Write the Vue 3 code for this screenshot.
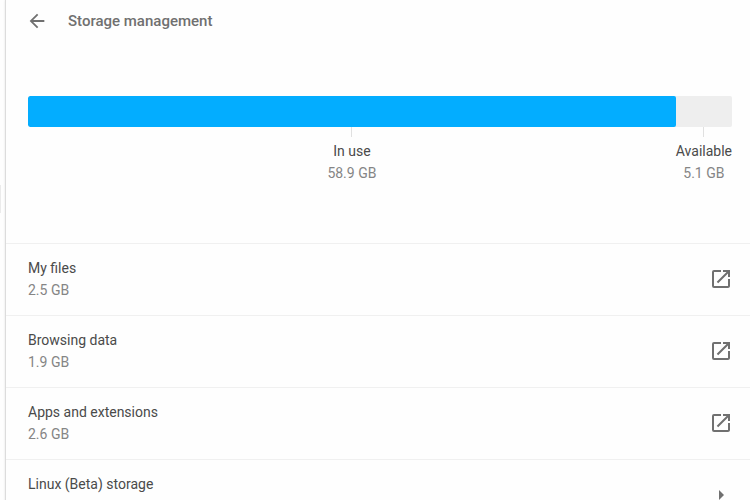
<script setup>
const used = 58.9
const available = 5.1
const usedShare = (used / (used + available)) * 100

const items = [
  { name: 'My files', size: '2.5 GB', external: true },
  { name: 'Browsing data', size: '1.9 GB', external: true },
  { name: 'Apps and extensions', size: '2.6 GB', external: true },
  { name: 'Linux (Beta) storage', size: '20.1 GB', external: false },
]
</script>

<template>
  <div class="page">
    <aside class="rail"><span class="thumb"></span></aside>
    <main class="panel">
      <header class="header">
        <button class="icon-button" type="button" aria-label="Back">
          <svg width="22" height="22" viewBox="0 0 24 24" fill="currentColor">
            <path d="M20 11H7.83l5.59-5.59L12 4l-8 8 8 8 1.41-1.41L7.83 13H20v-2z" />
          </svg>
        </button>
        <h1>Storage management</h1>
      </header>

      <section class="usage">
        <div class="bar">
          <div class="bar-used" :style="{ width: usedShare + '%' }"></div>
        </div>
        <div class="legend">
          <div class="legend-item wide">
            <span class="tick"></span>
            <span class="label">In use</span>
            <span class="size">{{ used }} GB</span>
          </div>
          <div class="legend-item">
            <span class="tick"></span>
            <span class="label">Available</span>
            <span class="size">{{ available }} GB</span>
          </div>
        </div>
      </section>

      <ul class="list">
        <li v-for="item in items" :key="item.name" class="row">
          <div class="text">
            <span class="label">{{ item.name }}</span>
            <span class="size">{{ item.size }}</span>
          </div>
          <button class="icon-button" type="button" :aria-label="'Open ' + item.name">
            <svg v-if="item.external" width="24" height="24" viewBox="0 0 24 24" fill="currentColor">
              <path d="M19 19H5V5h7V3H5a2 2 0 0 0-2 2v14a2 2 0 0 0 2 2h14c1.1 0 2-.9 2-2v-7h-2v7zM14 3v2h3.59l-9.83 9.83 1.41 1.41L19 6.41V10h2V3h-7z" />
            </svg>
            <svg v-else width="24" height="24" viewBox="0 0 24 24" fill="currentColor">
              <path d="M10 7l5 5-5 5z" />
            </svg>
          </button>
        </li>
      </ul>
    </main>
  </div>
</template>

<style>
body {
  background: #fefefe;
}
</style>

<style scoped>
.page {
  display: flex;
  height: 100vh;
  overflow: hidden;
  font-family: Roboto, "Liberation Sans", sans-serif;
  font-size: 14px;
  line-height: 22px;
  color: #4a4a4a;
}
.rail {
  flex: 0 0 5px;
  padding-top: 185px;
  box-sizing: border-box;
}
.thumb {
  display: block;
  width: 1px;
  height: 28px;
  background: #ebebeb;
}
.panel {
  flex: 1;
  min-width: 0;
  height: max-content;
  border-left: 1px solid #dcdcdc;
  box-shadow: 0 0 2px #e4e4e4;
}
.header {
  display: flex;
  align-items: center;
  gap: 20px;
  height: 42px;
  padding-left: 20px;
}
h1 {
  margin: 0;
  font-size: 15px;
  font-weight: 500;
  color: #707070;
}
.icon-button {
  display: flex;
  padding: 0;
  border: 0;
  background: none;
  color: #707070;
}
.usage {
  padding: 54px 18px 59px 22px;
}
.bar {
  height: 31px;
  border-radius: 2px;
  background: #eeeeee;
  overflow: hidden;
}
.bar-used {
  height: 100%;
  border-radius: 2px;
  background: #03adff;
}
.legend {
  display: flex;
}
.legend-item {
  display: flex;
  flex-direction: column;
  align-items: center;
}
.wide {
  flex: 1;
}
.tick {
  width: 1px;
  height: 10px;
  margin-bottom: 3px;
  background: #e0e0e0;
}
.label {
  color: #4a4a4a;
}
.size {
  color: #858585;
}
.list {
  margin: 0;
  padding: 0;
  list-style: none;
}
.row {
  display: flex;
  align-items: center;
  justify-content: space-between;
  height: 72px;
  box-sizing: border-box;
  padding: 0 17px 2px 22px;
  border-top: 1px solid #f0f0f0;
}
.text {
  display: flex;
  flex-direction: column;
}
</style>
